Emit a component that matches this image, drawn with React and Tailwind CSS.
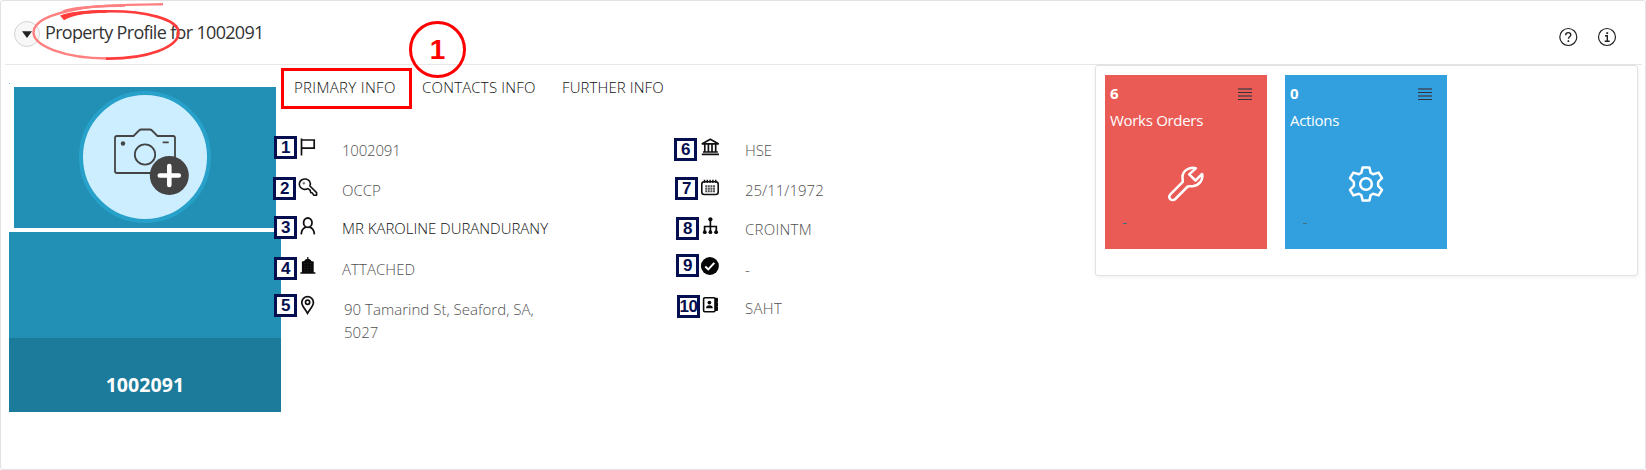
const ICONS = {
  flag: (
    <g fill="none" stroke="#111" strokeWidth="1.700">
      <path d="M3.500 1.500v17" />
      <path d="M3.500 3h12.700v8.200H3.500" />
    </g>
  ),
  key: (
    <g fill="none" stroke="#111" strokeWidth="1.600" strokeLinejoin="round">
      <path d="M9.800 11.600A5.600 5.200 0 1 1 11.600 4.300C12.600 5.900 12.400 7.900 11.900 9l6.700 6.600v2.600h-2.900l-1.300-2.100-1.700-.6-.6-2.300z" />
      <circle cx="5.800" cy="6.200" r="1" fill="#667" stroke="#889" strokeWidth="0.800" />
    </g>
  ),
  person: (
    <g fill="none" stroke="#111" strokeWidth="1.800">
      <ellipse cx="9.800" cy="6.700" rx="4.200" ry="4.700" />
      <path d="M3.200 18.400c.3-4.300 2.500-6.600 4.900-7.200M16.400 18.400c-.3-4.300-2.500-6.600-4.900-7.200" />
    </g>
  ),
  building: (
    <g fill="#0a0a0a">
      <path d="M9.200 1h1.200v1.800l2.600 1.200v1l2.700.6V16.200h1.700v1.500H2.400v-1.500h1.500V5.600L6.600 5V4l2.600-1.200z" />
      <path d="M6.800 7v9M9.800 7v9M12.800 7v9" stroke="#3a3a3a" strokeWidth="0.700" strokeDasharray="1 1.500" />
    </g>
  ),
  pin: (
    <g fill="none" stroke="#111" strokeWidth="1.700">
      <path d="M9.500 18.300C7.500 14.500 3.800 11 3.800 7.400a5.800 5.800 0 0 1 11.600 0c0 3.600-3.900 7.100-5.900 10.900z" />
      <circle cx="9.600" cy="7.200" r="2.100" />
    </g>
  ),
  bank: (
    <g fill="none" stroke="#111" strokeWidth="1.700">
      <path d="M2.300 6.800 10.300 2.300l8 4.500z" strokeLinejoin="round" />
      <path d="M4.800 7v8M8.400 7v8M12 7v8M15.700 7v8" />
      <path d="M3 15h14.800M1.800 17.300H19" />
    </g>
  ),
  calendar: (
    <g fill="none" stroke="#111">
      <rect x="1.800" y="3.800" width="16.400" height="12.700" rx="2.500" strokeWidth="1.600" />
      <path d="M4.500 1.800v3M7.300 1.800v3M10.100 1.800v3M12.900 1.800v3M15.700 1.800v3" strokeWidth="1.500" />
      <path d="M5.200 8.300h9.800M5.200 10.800h9.800M5.200 13.300h9.800" stroke="#555" strokeWidth="1.900" strokeDasharray="2 .6" />
    </g>
  ),
  sitemap: (
    <g fill="#0a0a0a">
      <path d="M10.400 3v14M4.600 16V10.500h11.700V16" fill="none" stroke="#0a0a0a" strokeWidth="1.700" />
      <circle cx="10.400" cy="3.300" r="2.100" />
      <circle cx="4.800" cy="16.200" r="1.900" />
      <circle cx="10.400" cy="16.200" r="1.900" />
      <circle cx="16.100" cy="16.200" r="1.900" />
    </g>
  ),
  check: (
    <g>
      <circle cx="9.900" cy="10" r="9" fill="#050505" />
      <path d="m5.300 10.500 3 2.900 6-6.600" fill="none" stroke="#fff" strokeWidth="2" />
    </g>
  ),
  contact: (
    <g fill="#0a0a0a">
      <rect x="3.600" y="2.800" width="11.400" height="14" rx="1.200" fill="none" stroke="#0a0a0a" strokeWidth="1.600" />
      <path d="M15 2.800h2.500l.5.800v2.900l-.5.700.5.700v3l-.5.700.5.700v2.800l-.5.900H15z" />
      <circle cx="9.400" cy="7.600" r="1.900" />
      <path d="M6 13.200c0-2 1.300-3 3.400-3s3.400 1 3.400 3z" />
    </g>
  ),
}

const LEFT_ROWS = [
  { icon: 'flag', text: '1002091', row: 'h-[40px]', nudge: '-mt-[2px]', tone: 'text-[#505050] tracking-[-0.2px]' },
  { icon: 'key', text: 'OCCP', row: 'h-[38px]', nudge: '-mt-[2px]', tone: 'text-[#505050] tracking-[0px]' },
  { icon: 'person', text: 'MR KAROLINE DURANDURANY', row: 'h-[41px]', nudge: '-mt-[1px]', tone: 'text-[#111] tracking-[-0.02px]' },
  { icon: 'building', text: 'ATTACHED', row: 'h-[40px]', nudge: '-mt-[2px]', tone: 'text-[#505050] tracking-[0.05px]' },
  { icon: 'pin', text: '90 Tamarind St, Seaford, SA, 5027', row: 'h-[46px]', nudge: '-mt-[3px]', tone: 'pl-[2px] text-[#505050] tracking-[0.02px]' },
]

const RIGHT_ROWS = [
  { icon: 'bank', text: 'HSE', row: 'h-[40px]', nudge: '-mt-[2px]', tone: 'text-[#505050] tracking-[-0.1px]' },
  { icon: 'calendar', text: '25/11/1972', row: 'h-[39px]', nudge: '-mt-[1px]', tone: 'text-[#505050]' },
  { icon: 'sitemap', text: 'CROINTM', row: 'h-[40px]', nudge: '-mt-[2px]', tone: 'text-[#505050] tracking-[0.25px]' },
  { icon: 'check', text: '-', row: 'h-[39px]', nudge: '-mt-[2px]', tone: 'text-[#505050]' },
  { icon: 'contact', text: 'SAHT', row: 'h-[46px]', nudge: '-mt-[2px]', tone: 'text-[#505050] tracking-[0.3px]' },
]

const MARKERS = [
  { n: 1, at: 'left-[274px] top-[136px]' },
  { n: 2, at: 'left-[273px] top-[177px]' },
  { n: 3, at: 'left-[274px] top-[216px]' },
  { n: 4, at: 'left-[274px] top-[257px]' },
  { n: 5, at: 'left-[274px] top-[294px]' },
  { n: 6, at: 'left-[674px] top-[138px]' },
  { n: 7, at: 'left-[675px] top-[177px]' },
  { n: 8, at: 'left-[676px] top-[217px]' },
  { n: 9, at: 'left-[676px] top-[254px]' },
  { n: 10, at: 'left-[677px] top-[295px]' },
]

function DetailColumn({ rows, gap, width }) {
  return (
    <div className={width}>
      {rows.map((item) => (
        <div key={item.icon} className={`flex items-start ${gap} ${item.row}`}>
          <svg viewBox="0 0 20 20" className={`size-5 shrink-0 ${item.nudge}`}>
            {ICONS[item.icon]}
          </svg>
          <p className={`w-[210px] font-light text-[15px] leading-[22.500px] ${item.tone}`}>{item.text}</p>
        </div>
      ))}
    </div>
  )
}

function PhotoCard() {
  return (
    <div className="mt-[18px] ml-[8px] w-[272px] shrink-0">
      <div className="mb-[3px] h-px w-px bg-[#5aa9c4]" />
      <div className="ml-[5px] mr-[5px] flex h-[141px] items-start justify-center bg-[#2290b5] pt-[4px]">
        <div className="flex size-[132px] items-center justify-center rounded-full border-4 border-[#28a1ca] bg-[#cceeff]">
          <svg viewBox="0 0 124 124" className="size-[124px]">
            <g fill="none" stroke="#444" strokeWidth="1.800">
              <path d="M34 41h16.500l5.500-5.500c.7-.7 1.300-1 2.300-1h8.400c1 0 1.600.3 2.300 1l5.500 5.500H90c1.300 0 2 .7 2 2v33c0 1.300-.7 2-2 2H34c-1.300 0-2-.7-2-2V43c0-1.300.7-2 2-2z" />
              <circle cx="62" cy="59.500" r="10.200" />
              <path d="M79.700 47.300h6" />
            </g>
            <circle cx="40" cy="48.500" r="2.200" fill="#444" />
            <circle cx="86.300" cy="80.500" r="19.500" fill="#444" />
            <path d="M86.300 71v19M76.800 80.500h19" stroke="#fff" strokeWidth="4.600" strokeLinecap="round" />
          </svg>
        </div>
      </div>
      <div className="mt-[4px] h-[106px] bg-[#2290b5]" />
      <div className="flex h-[74px] items-center justify-center bg-[#1c7a9a] pt-[20px]">
        <span className="text-[19.500px] font-bold tracking-[0.1px] text-white">1002091</span>
      </div>
    </div>
  )
}

function Tile({ count, label, color, children }) {
  return (
    <div className={`flex h-[174px] w-[162px] flex-col text-white ${color}`}>
      <div className="flex justify-between pt-[7px] pr-[15px] pl-[5px]">
        <span className="text-[15px] leading-[22px] font-bold">{count}</span>
        <svg viewBox="0 0 14 13" className="mt-[6px] h-[13px] w-[14px]" shapeRendering="crispEdges">
          <path d="M0 1h14M0 8h14" stroke="#3f3f48" strokeOpacity="0.65" strokeWidth="2" />
          <path d="M0 4.500h14M0 11.500h14" stroke="#33333d" strokeWidth="1" />
        </svg>
      </div>
      <p className="mt-[5px] pl-[5px] text-[15px] leading-[22px] tracking-[-0.3px]">{label}</p>
      <div className="mt-[35px] flex justify-center">{children}</div>
      <span className="mt-[21px] ml-[18px] h-px w-[4px] bg-[#3f6f80]" />
    </div>
  )
}

export default function App() {
  return (
    <div className="relative h-[470px] w-[1646px] overflow-hidden rounded-[3px] border border-[#e2e2e2] bg-white font-['Open_Sans','Noto_Sans',sans-serif]">
      {/* Header */}
      <header className="mr-[3px] ml-[4px] flex h-[64px] items-start border-b border-[#e8e8e8]">
        <button className="mt-[20px] ml-[9px] flex size-[26px] items-center justify-center rounded-full border border-[#d4d4d4] bg-[#f7f7f7]">
          <svg viewBox="0 0 10 7" className="h-[7px] w-[10px]">
            <path d="M0 .3h10L5 7z" fill="#222" />
          </svg>
        </button>
        <h1 className="mt-[18px] ml-[5px] text-[18px] leading-[26px] font-normal tracking-[-0.67px] whitespace-nowrap text-[#333]">
          Property Profile for 1002091
        </h1>
        <div className="mt-[26px] mr-[25px] ml-auto flex gap-[19px]">
          <svg viewBox="0 0 20 20" className="size-5" fill="none" stroke="#222" strokeWidth="1.200">
            <circle cx="10.300" cy="10" r="8.500" />
            <path d="M7.700 8.200c0-1.700 1-2.600 2.600-2.600s2.500.9 2.500 2.200c0 1.900-2.400 1.900-2.400 4" strokeWidth="1.400" />
            <path d="M10.400 13.300v1.700" strokeWidth="1.600" />
          </svg>
          <svg viewBox="0 0 20 20" className="size-5" fill="none" stroke="#222" strokeWidth="1.200">
            <circle cx="10" cy="10" r="8.500" />
            <path d="M8 8.800h2.300v5M7.700 14.200h5" strokeWidth="1.400" />
            <path d="M10.200 5.200v1.800" strokeWidth="1.900" />
          </svg>
        </div>
      </header>

      <main className="flex items-start">
        <PhotoCard />

        <section className="w-[813px] shrink-0">
          <nav className="mt-[11px] ml-[13px] flex text-[15px] leading-[22px] font-light whitespace-nowrap text-[#111]">
            <a className="w-[128px] tracking-[0.33px]">PRIMARY INFO</a>
            <a className="w-[140px] tracking-[0.18px]">CONTACTS INFO</a>
            <a className="tracking-[0.1px]">FURTHER INFO</a>
          </nav>
          <div className="mt-[41px] ml-[17px] flex">
            <DetailColumn rows={LEFT_ROWS} gap="gap-[24px]" width="w-[402px]" />
            <DetailColumn rows={RIGHT_ROWS} gap="gap-[25px]" width="w-[300px]" />
          </div>
        </section>

        <aside className="ml-[1px] flex h-[211px] w-[543px] gap-[18px] rounded-[3px] border border-[#e2e2e2] pt-[9px] pl-[9px] shadow-[0_1px_4px_rgba(0,0,0,0.07)]">
          <Tile count="6" label="Works Orders" color="bg-[#ea5b55]">
            <svg viewBox="0 0 36 36" className="size-9" fill="none" stroke="#fff" strokeWidth="2.500" strokeLinejoin="round">
              <path d="M27.800 2.300C22 .2 14.500 4.700 14.500 11c0 2 .3 3.300.3 4.900L2.600 28.200c-1.600 1.600-1.600 3.500-.3 4.900 1.400 1.400 3.600 1.300 5-.1l12.400-12.500c1.500-.3 2.900 0 4.800-.3 6.500-.6 11-6.200 9.600-12.300L27.500 14.500l-6.300-6.200z" />
            </svg>
          </Tile>
          <Tile count="0" label="Actions" color="bg-[#329fde]">
            <svg viewBox="0 0 36 36" className="size-9" fill="none" stroke="#fff" strokeWidth="2.500" strokeLinejoin="round">
              <path d="M14.600 1.500h6.800l1.200 5.200 2.500 1.500 5.500-1.600 3.400 5.600-3.900 4v3.600l3.900 4-3.400 5.600-5.500-1.600-2.500 1.500-1.200 5.200h-6.800l-1.200-5.200-2.500-1.500-5.500 1.600L2 23.800l3.900-4v-3.600L2 12.200l3.400-5.600 5.500 1.600 2.500-1.500z" />
              <circle cx="18" cy="18" r="5.800" />
            </svg>
          </Tile>
        </aside>
      </main>

      {/* Callouts drawn over the page */}
      <svg viewBox="0 0 190 64" className="pointer-events-none absolute -top-px -left-px h-[64px] w-[190px]" fill="none">
        <path d="M163 4.300C133 4.600 98 4.500 78 9 50 14 34 22 33.500 32c0 14 30 26 74 26.500" stroke="#ff8080" strokeWidth="2.400" />
        <path d="M125 5.500c-20 .6-50 .8-62 6" stroke="#ff8080" strokeWidth="2.400" />
        <path d="M106 58.600c42 .4 72-11.600 72.500-25.600C179 19 145 10.500 105 11.300c-17 .3-32 2-42 5" stroke="#ff3b3b" strokeWidth="2.700" />
        <path d="M60 15.500c12-4.500 28-5.500 46-5.600v3c-20 0-32 1.600-42 7.300z" fill="#ff3b3b" />
      </svg>
      <div className="absolute top-[67px] left-[280px] h-[41px] w-[131px] border-[3px] border-[#f00]" />
      <div className="absolute top-[20px] left-[408px] flex size-[57px] items-center justify-center rounded-full border-[3px] border-[#f00] font-['Liberation_Sans',sans-serif] text-[28px] font-bold text-[#f00]">
        1
      </div>
      {MARKERS.map((m) => (
        <span
          key={m.n}
          className={`absolute -mt-px -ml-px flex size-[23px] items-center justify-center border-[3px] border-[#050f50] bg-white font-['Liberation_Sans',sans-serif] text-[17px] leading-none font-bold tracking-[-0.5px] text-[#050f50] ${m.at}`}
        >
          {m.n}
        </span>
      ))}
    </div>
  )
}
